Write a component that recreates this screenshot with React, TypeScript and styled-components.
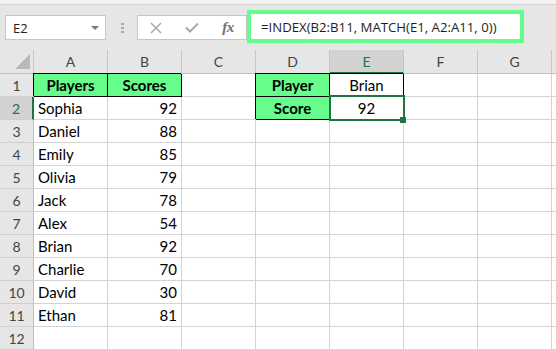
import * as React from 'react'
import styled, { createGlobalStyle } from 'styled-components'

const GlobalStyle = createGlobalStyle`
  html, body {
    margin: 0;
    padding: 0;
    background: #ffffff;
    overflow: hidden;
  }
  body {
    font-family: Lato, 'Liberation Sans', sans-serif;
  }
`

const Window = styled.div`
  width: 556px;
  height: 350px;
  overflow: hidden;
  display: flex;
  flex-direction: column;
`

const RibbonEdge = styled.div`
  height: 4px;
  background: #f3f3f3;
  border-bottom: 1px solid #d4d4d4;
`

const FormulaBar = styled.div`
  height: 45px;
  background: #e6e6e6;
  display: flex;
  align-items: center;
  padding-left: 5px;
`

const NameBox = styled.div`
  box-sizing: border-box;
  width: 101px;
  height: 25px;
  background: #fff;
  border: 1px solid #c6c6c6;
  display: flex;
  align-items: center;
  justify-content: space-between;
  padding: 0 6px 0 7px;
  font-family: 'Open Sans', 'Noto Sans', sans-serif;
  font-size: 13px;
  color: #222;
`

const Caret = styled.span`
  width: 0;
  height: 0;
  border-left: 4px solid transparent;
  border-right: 4px solid transparent;
  border-top: 4px solid #7a7a7a;
`

const Grip = styled.div`
  width: 3px;
  margin: 0 13px 0 15px;
  display: flex;
  flex-direction: column;
  gap: 2px;

  span {
    width: 3px;
    height: 2px;
    background: #a8a8a8;
  }
`

const ButtonBox = styled.div`
  box-sizing: border-box;
  width: 110px;
  height: 25px;
  background: #fff;
  border: 1px solid #c6c6c6;
  display: flex;
  align-items: center;
  gap: 12px;
  padding-left: 6px;
`

const BarButton = styled.div`
  width: 24px;
  height: 23px;
  display: flex;
  align-items: center;
  justify-content: center;
`

const Fx = styled.span`
  font-family: 'Liberation Serif', serif;
  font-style: italic;
  font-weight: bold;
  font-size: 15px;
  color: #6f6f6f;
  letter-spacing: -0.5px;
`

const FormulaInput = styled.div`
  box-sizing: border-box;
  width: 277px;
  height: 33px;
  margin-bottom: 2px;
  background: #fff;
  border: 4px solid #66fd8d;
  display: flex;
  align-items: center;
  padding-left: 10px;
  font-family: 'Open Sans', 'Noto Sans', sans-serif;
  font-size: 13.2px;
  color: #1e1e1e;
  white-space: nowrap;
`

const Sheet = styled.div`
  display: grid;
  grid-template-columns: 34px repeat(7, 74px) 1fr;
  grid-template-rows: 24px;
  grid-auto-rows: 23px;
`

const Corner = styled.div`
  box-sizing: border-box;
  background: #e6e6e6;
  border-right: 1px solid #c6c6c6;
  border-bottom: 1px solid #bfbfbf;
  display: flex;
  align-items: flex-end;
  justify-content: flex-end;
  padding: 0 3px 4px 0;
`

const ColHead = styled.div<{ $active?: boolean }>`
  box-sizing: border-box;
  background: ${(p) => (p.$active ? '#d2d2d2' : '#e6e6e6')};
  border-right: 1px solid #c6c6c6;
  border-bottom: ${(p) => (p.$active ? '2px solid #217346' : '1px solid #bfbfbf')};
  display: flex;
  align-items: center;
  justify-content: center;
  font-size: 14px;
  color: ${(p) => (p.$active ? '#217346' : '#444')};
`

const RowHead = styled.div<{ $active?: boolean }>`
  box-sizing: border-box;
  background: ${(p) => (p.$active ? '#d2d2d2' : '#e6e6e6')};
  border-right: ${(p) => (p.$active ? '2px solid #217346' : '1px solid #bfbfbf')};
  border-bottom: 1px solid #cfcfcf;
  display: flex;
  align-items: center;
  justify-content: center;
  font-size: 14px;
  color: ${(p) => (p.$active ? '#217346' : '#444')};
`

const Cell = styled.div<{
  $align?: 'left' | 'center' | 'right'
  $bold?: boolean
  $fill?: boolean
  $boxed?: boolean
}>`
  position: relative;
  box-sizing: border-box;
  background: ${(p) => (p.$fill ? '#66fd8d' : '#fff')};
  border-right: 1px solid ${(p) => (p.$boxed ? '#000' : '#d4d4d4')};
  border-bottom: 1px solid ${(p) => (p.$boxed ? '#000' : '#d4d4d4')};
  ${(p) => p.$boxed && 'box-shadow: -1px -1px 0 0 #000;'}
  display: flex;
  align-items: center;
  justify-content: ${(p) =>
    p.$align === 'center' ? 'center' : p.$align === 'right' ? 'flex-end' : 'flex-start'};
  padding: 0 4px;
  font-size: 15px;
  font-weight: ${(p) => (p.$bold ? 700 : 400)};
  color: #000;
  white-space: nowrap;
`

const Selection = styled.div`
  position: absolute;
  top: -2px;
  left: -1px;
  right: -2px;
  bottom: -2px;
  border: 2px solid #217346;
  z-index: 2;
  pointer-events: none;
`

const Handle = styled.div`
  position: absolute;
  right: -3px;
  bottom: -4px;
  width: 6px;
  height: 6px;
  background: #217346;
  z-index: 3;
`

type CellData = {
  v?: string | number
  align?: 'left' | 'center' | 'right'
  bold?: boolean
  fill?: boolean
  boxed?: boolean
  selected?: boolean
}

const columns = ['A', 'B', 'C', 'D', 'E', 'F', 'G', '']

const players: [string, number][] = [
  ['Sophia', 92],
  ['Daniel', 88],
  ['Emily', 85],
  ['Olivia', 79],
  ['Jack', 78],
  ['Alex', 54],
  ['Brian', 92],
  ['Charlie', 70],
  ['David', 30],
  ['Ethan', 81],
]

const head = (v: string): CellData => ({ v, align: 'center', bold: true, fill: true, boxed: true })

const buildRows = (): CellData[][] => {
  const rows: CellData[][] = []
  rows.push([head('Players'), head('Scores'), {}, head('Player'), { v: 'Brian', align: 'center', boxed: true }])
  players.forEach(([name, score], i) => {
    const row: CellData[] = [{ v: name }, { v: score, align: 'right' }]
    if (i === 0) {
      row.push({}, head('Score'), { v: 92, align: 'center', boxed: true, selected: true })
    }
    rows.push(row)
  })
  rows.push([])
  return rows
}

const rows = buildRows()

const XIcon = () => (
  <svg width="12" height="12" viewBox="0 0 12 12">
    <path d="M1 1 L11 11 M11 1 L1 11" stroke="#a9a9a9" strokeWidth="1.5" fill="none" />
  </svg>
)

const CheckIcon = () => (
  <svg width="14" height="11" viewBox="0 0 14 11">
    <path d="M1 5.5 L5 9.5 L13 1.5" stroke="#a9a9a9" strokeWidth="2" fill="none" />
  </svg>
)

const CornerMark = () => (
  <svg width="15" height="15" viewBox="0 0 15 15">
    <path d="M15 0 L15 15 L0 15 Z" fill="#b9b9b9" />
  </svg>
)

export default function App() {
  return (
    <>
      <GlobalStyle />
      <Window>
        <RibbonEdge />
        <FormulaBar>
          <NameBox>
            E2
            <Caret />
          </NameBox>
          <Grip>
            <span />
            <span />
            <span />
          </Grip>
          <ButtonBox>
            <BarButton>
              <XIcon />
            </BarButton>
            <BarButton>
              <CheckIcon />
            </BarButton>
            <BarButton>
              <Fx>fx</Fx>
            </BarButton>
          </ButtonBox>
          <FormulaInput>=INDEX(B2:B11, MATCH(E1, A2:A11, 0))</FormulaInput>
        </FormulaBar>
        <Sheet>
          <Corner>
            <CornerMark />
          </Corner>
          {columns.map((c, i) => (
            <ColHead key={i} $active={c === 'E'}>
              {c}
            </ColHead>
          ))}
          {rows.map((row, r) => (
            <React.Fragment key={r}>
              <RowHead $active={r === 1}>{r + 1}</RowHead>
              {columns.map((_, c) => {
                const d = row[c] || {}
                return (
                  <Cell key={c} $align={d.align} $bold={d.bold} $fill={d.fill} $boxed={d.boxed}>
                    {d.v}
                    {d.selected && (
                      <>
                        <Selection />
                        <Handle />
                      </>
                    )}
                  </Cell>
                )
              })}
            </React.Fragment>
          ))}
        </Sheet>
      </Window>
    </>
  )
}
